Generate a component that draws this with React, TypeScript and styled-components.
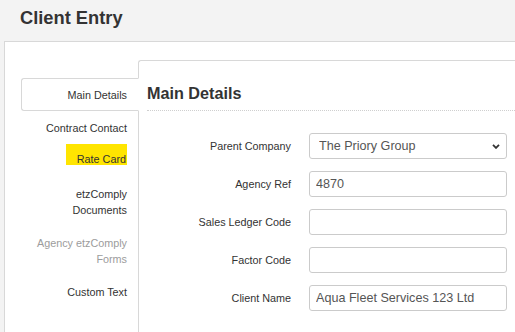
import { Fragment } from "react";
import styled, { createGlobalStyle } from "styled-components";

const GlobalStyle = createGlobalStyle`
  html, body {
    margin: 0;
    height: 100%;
    overflow: hidden;
  }
  body {
    background: #f3f3f3;
    font-family: "Liberation Sans", Arial, sans-serif;
    color: #333;
  }
`;

const Header = styled.header`
  height: 41px;
  box-sizing: border-box;
  padding: 8px 0 0 20px;
`;

const Title = styled.h1`
  margin: 0;
  font-size: 18.3px;
  line-height: 20px;
  font-weight: bold;
  color: #333;
`;

const Panel = styled.main`
  margin-left: 4px;
  height: 291px;
  box-sizing: border-box;
  background: #fff;
  border-top: 1px solid #d8d8d8;
  border-left: 1px solid #d8d8d8;
  padding: 18px 0 0 16px;
  display: flex;
  align-items: flex-start;
`;

const TabList = styled.ul`
  list-style: none;
  margin: 18px -1px 0 0;
  padding: 0;
  width: 118px;
  flex-shrink: 0;
  position: relative;
  z-index: 1;
`;

const Tab = styled.li<{ $active?: boolean; $muted?: boolean }>`
  border: 1px solid ${(p) => (p.$active ? "#d8d8d8" : "transparent")};
  border-right-color: transparent;
  border-radius: 3px 0 0 3px;
  background: ${(p) => (p.$active ? "#fff" : "transparent")};
  padding: 7.5px 11px 7.5px 10px;
  font-size: 10.8px;
  line-height: 16px;
  text-align: right;
  color: ${(p) => (p.$muted ? "#9c9c9c" : "#333")};
  cursor: ${(p) => (p.$muted ? "default" : "pointer")};
`;

const Highlight = styled.span`
  display: inline-block;
  background: #ffe500;
  line-height: 12px;
  padding: 9px 1px 0 11px;
  margin-top: -9px;
  vertical-align: 2px;
`;

const Pane = styled.section`
  flex: 1;
  align-self: stretch;
  border-top: 1px solid #d8d8d8;
  border-left: 1px solid #d8d8d8;
  border-top-left-radius: 3px;
  padding-left: 8px;
`;

const Heading = styled.h2`
  margin: 23px 0 0;
  padding-bottom: 8px;
  border-bottom: 1px dotted #cfcfcf;
  font-size: 16.2px;
  line-height: 18px;
  font-weight: bold;
  color: #333;
`;

const Form = styled.form`
  display: grid;
  grid-template-columns: 144px 198px;
  column-gap: 18px;
  row-gap: 12px;
  margin-top: 22px;
  align-items: center;
`;

const Label = styled.label`
  text-align: right;
  font-size: 10.8px;
  color: #333;
`;

const Field = styled.input`
  height: 26px;
  box-sizing: border-box;
  width: 100%;
  margin: 0;
  border: 1px solid #cbcbcb;
  border-radius: 3px;
  padding: 0 6px;
  font-family: "Liberation Sans", Arial, sans-serif;
  font-size: 12.6px;
  color: #555;
  background: #fff;
  outline: none;
`;

const SelectWrap = styled.div`
  position: relative;
  height: 26px;
`;

const Select = styled.select`
  appearance: none;
  height: 26px;
  width: 100%;
  box-sizing: border-box;
  margin: 0;
  border: 1px solid #cbcbcb;
  border-radius: 3px;
  padding: 0 20px 0 9px;
  font-family: "Liberation Sans", Arial, sans-serif;
  font-size: 12.6px;
  color: #555;
  background: #fff;
  outline: none;
`;

const Chevron = styled.svg`
  position: absolute;
  right: 7px;
  top: 11px;
  pointer-events: none;
`;

const tabs = [
  { label: "Main Details", active: true },
  { label: "Contract Contact" },
  { label: "Rate Card", highlight: true },
  { label: "etzComply Documents" },
  { label: "Agency etzComply Forms", muted: true },
  { label: "Custom Text" },
];

const fields = [
  { label: "Sales Ledger Code", value: "" },
  { label: "Factor Code", value: "" },
  { label: "Client Name", value: "Aqua Fleet Services 123 Ltd" },
];

const App = () => {
  return (
    <>
      <GlobalStyle />
      <Header>
        <Title>Client Entry</Title>
      </Header>
      <Panel>
        <TabList>
          {tabs.map((t) => (
            <Tab key={t.label} $active={t.active} $muted={t.muted}>
              {t.highlight ? <Highlight>{t.label}</Highlight> : t.label}
            </Tab>
          ))}
        </TabList>
        <Pane>
          <Heading>Main Details</Heading>
          <Form>
            <Label>Parent Company</Label>
            <SelectWrap>
              <Select defaultValue="priory">
                <option value="priory">The Priory Group</option>
              </Select>
              <Chevron width="8" height="5" viewBox="0 0 8 5">
                <polyline
                  points="1,0.9 4,3.9 7,0.9"
                  fill="none"
                  stroke="#333"
                  strokeWidth="1.8"
                />
              </Chevron>
            </SelectWrap>
            <Label>Agency Ref</Label>
            <Field readOnly value="4870" />
            {fields.map((f) => (
              <Fragment key={f.label}>
                <Label>{f.label}</Label>
                <Field readOnly value={f.value} />
              </Fragment>
            ))}
          </Form>
        </Pane>
      </Panel>
    </>
  );
};

export default App;
